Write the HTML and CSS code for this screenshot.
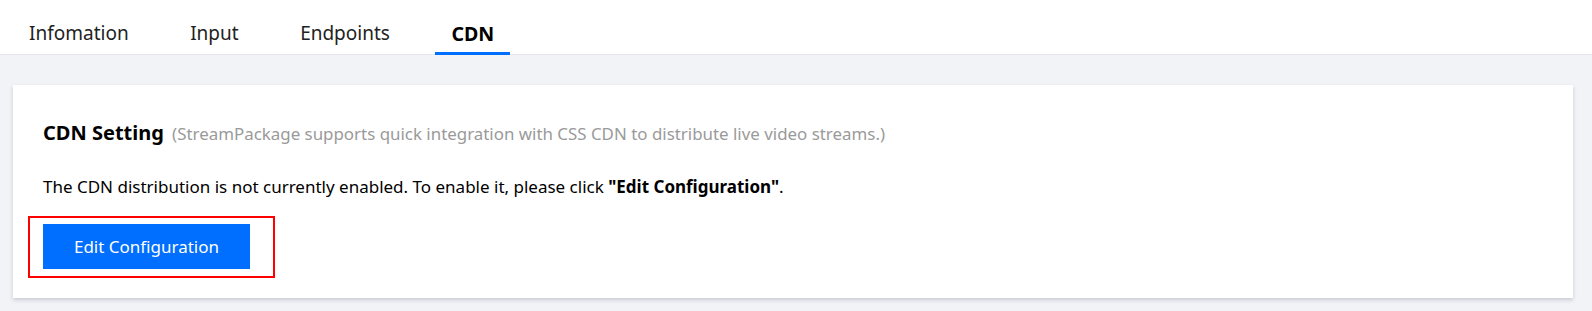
FILE: index.html
```html
<!DOCTYPE html>
<html lang="en">
<head>
<meta charset="utf-8">
<title>CDN</title>
<link rel="stylesheet" href="styles.css">
</head>
<body>
<nav class="tabbar">
  <a class="tab">Infomation</a>
  <a class="tab">Input</a>
  <a class="tab">Endpoints</a>
  <a class="tab active">CDN</a>
</nav>
<main class="main">
  <section class="card">
    <h2 class="card-title">CDN Setting <span class="card-desc">(StreamPackage supports quick integration with CSS CDN to distribute live video streams.)</span></h2>
    <p class="card-text">The CDN distribution is not currently enabled. To enable it, please click <strong>"Edit Configuration"</strong>.</p>
    <div class="highlight">
      <button class="btn-primary">Edit Configuration</button>
    </div>
  </section>
</main>
</body>
</html>
```

FILE: styles.css
```css
* { box-sizing: border-box; }
html, body {
  margin: 0;
  padding: 0;
  background: #f2f3f7;
  font-family: "Noto Sans", "Open Sans", sans-serif;
  color: #000;
}
.tabbar {
  display: flex;
  gap: 29.5px;
  height: 55px;
  padding-left: 13px;
  background: #fff;
  border-bottom: 1px solid #e5e6eb;
}
.tab {
  display: block;
  height: 55px;
  padding: 20px 16px 6px;
  font-size: 19px;
  line-height: 27px;
  color: #222;
  border-bottom: 3px solid transparent;
  cursor: pointer;
}
.tab.active {
  font-size: 19.6px;
  font-weight: 700;
  color: #000;
  border-bottom-color: #006eff;
}
.main {
  padding: 30px 19px 13px 13px;
}
.card {
  background: #fff;
  box-shadow: 0 2px 4px rgba(54, 58, 80, 0.22);
  padding: 34px 30px 20px;
}
.card-title {
  margin: 0;
  font-size: 20px;
  line-height: 28px;
  font-weight: 700;
  color: #000;
}
.card-desc {
  font-size: 16.9px;
  font-weight: 400;
  color: #9a9a9a;
  margin-left: 3px;
}
.card-text {
  margin: 26px 0 0;
  font-size: 17px;
  line-height: 26px;
  color: #000;
}
.card-text strong { font-weight: 700; }
.highlight {
  display: inline-block;
  margin: 16px 0 0 -15px;
  padding: 6px 23px 7px 13px;
  border: 2px solid #ff0000;
}
.btn-primary {
  display: block;
  width: 207px;
  height: 45px;
  border: 0;
  background: #006eff;
  color: #fff;
  font-family: inherit;
  font-size: 17px;
  padding: 0;
  cursor: pointer;
}
```
